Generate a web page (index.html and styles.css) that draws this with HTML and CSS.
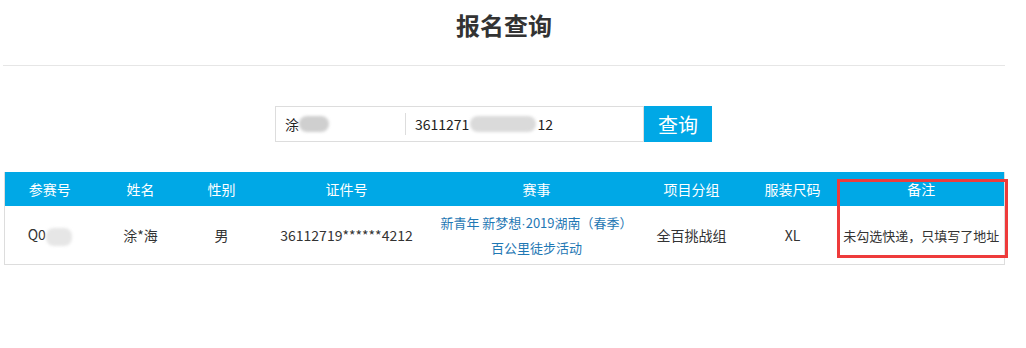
FILE: index.html
```html
<!DOCTYPE html>
<html>
<head>
  <meta charset="utf-8">
  <link rel="stylesheet" href="styles.css">
</head>
<body>
  <div class="page">
    <div class="title-bar">
      <h1>报名查询</h1>
    </div>

    <div class="search">
      <div class="search-box">
        <div class="field name-field">涂<span class="blur blur-name"></span></div>
        <div class="field id-field">3611271<span class="blur blur-id"></span>12</div>
      </div>
      <button type="button" class="search-button">查询</button>
    </div>

    <table class="result-table">
      <colgroup>
        <col class="c1"><col class="c2"><col class="c3"><col class="c4">
        <col class="c5"><col class="c6"><col class="c7"><col class="c8">
      </colgroup>
      <thead>
        <tr>
          <th>参赛号</th>
          <th>姓名</th>
          <th>性别</th>
          <th>证件号</th>
          <th>赛事</th>
          <th>项目分组</th>
          <th>服装尺码</th>
          <th>备注</th>
        </tr>
      </thead>
      <tbody>
        <tr>
          <td>Q0<span class="blur blur-no"></span></td>
          <td>涂*海</td>
          <td>男</td>
          <td>36112719******4212</td>
          <td class="event">新青年 新梦想<span class="dot">·</span>2019湖南（春季）<br>百公里徒步活动</td>
          <td>全百挑战组</td>
          <td>XL</td>
          <td class="note">未勾选快递，只填写了地址</td>
        </tr>
      </tbody>
    </table>

    <div class="highlight"></div>
  </div>
</body>
</html>
```

FILE: styles.css
```css
body {
  margin: 0;
  font-family: "Noto Sans CJK SC", "Liberation Sans", sans-serif;
  color: #333;
  background: #fff;
}

.page {
  position: relative;
  width: 1002px;
  margin-left: 3px;
}

.title-bar {
  height: 66px;
  border-bottom: 1px solid #e6e6e6;
  display: flex;
  justify-content: center;
  box-sizing: border-box;
}

.title-bar h1 {
  margin: 0;
  font-size: 24px;
  line-height: 50px;
  font-weight: bold;
  color: #333;
}

.search {
  display: flex;
  margin-top: 40px;
  margin-left: 272px;
  height: 36px;
}

.search-box {
  display: flex;
  width: 369px;
  border: 1px solid #ddd;
  box-sizing: border-box;
}

.field {
  display: flex;
  align-items: center;
  font-size: 14px;
  color: #222;
  box-sizing: border-box;
}

.name-field {
  width: 129px;
  padding-left: 9px;
}

.id-field {
  flex: 1;
  padding-left: 9px;
  border-left: 1px solid #ddd;
  margin: 6px 0;
}

.blur {
  display: inline-block;
  height: 16px;
  border-radius: 8px;
  background: #d4d4d4;
  filter: blur(1.5px);
  vertical-align: middle;
}

.blur-name {
  width: 30px;
  background: #cfcfcf;
}

.blur-id {
  width: 66px;
  margin: 0 1px;
  background: #dadada;
}

.blur-no {
  width: 26px;
  height: 18px;
  background: #e6e6e6;
}

.search-button {
  width: 68px;
  height: 36px;
  border: none;
  background: #00a8e6;
  color: #fff;
  font-family: inherit;
  font-size: 20px;
  padding: 0;
  cursor: pointer;
}

.result-table {
  margin-top: 30px;
  margin-left: 1px;
  width: 1000px;
  border-collapse: collapse;
  table-layout: fixed;
  border-left: 1px solid #ddd;
  border-right: 1px solid #ddd;
  font-size: 14px;
}

.c1 { width: 90px; }
.c2 { width: 92px; }
.c3 { width: 70px; }
.c4 { width: 180px; }
.c5 { width: 200px; }
.c6 { width: 110px; }
.c7 { width: 92px; }
.c8 { width: 166px; }

.result-table th {
  height: 34px;
  padding: 0;
  background: #00a8e6;
  color: #fff;
  font-weight: normal;
  text-align: center;
}

.result-table td {
  height: 58px;
  padding: 0;
  text-align: center;
  border-bottom: 1px solid #ddd;
  color: #333;
}

.result-table td.event {
  color: #1f78b4;
  line-height: 24px;
  font-size: 13px;
  white-space: nowrap;
}

.event .dot {
  font-family: "Liberation Sans", sans-serif;
}

.result-table td.note {
  font-size: 13px;
  white-space: nowrap;
}

.highlight {
  position: absolute;
  left: 834px;
  top: 179px;
  width: 171px;
  height: 79px;
  border: 3px solid #ee3b3b;
  box-sizing: border-box;
}
```
